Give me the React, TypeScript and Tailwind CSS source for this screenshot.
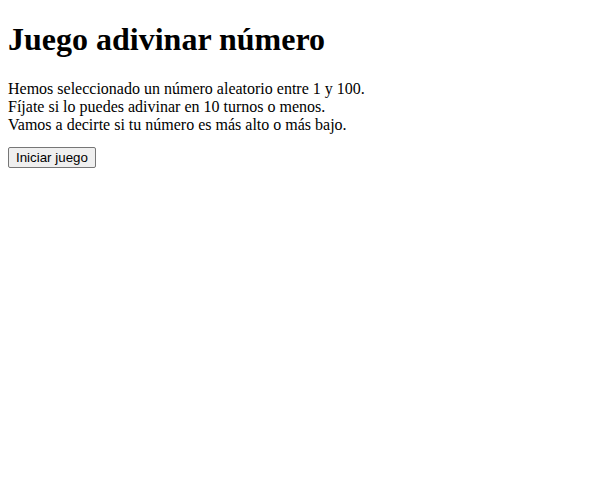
export default function App() {
  return (
    <div className="px-2 bg-white text-black" style={{ fontFamily: '"Liberation Serif", "Times New Roman", serif' }}>
      <div className="pt-[21.44px]">
        <h1 className="text-[32px] font-bold leading-[normal] mb-[21.44px]">Juego adivinar número</h1>
        <p className="text-[16px] leading-[normal] mb-[11px]">
          Hemos seleccionado un número aleatorio entre 1 y 100.
          <br />
          Fíjate si lo puedes adivinar en 10 turnos o menos.
          <br />
          Vamos a decirte si tu número es más alto o más bajo.
        </p>
        <div>
          <button
            className="border border-[#767676] bg-[#efefef] rounded-[2px] px-[7px] py-[2px] text-[13.33px] leading-[normal] text-black"
            style={{ fontFamily: '"Liberation Sans", Arial, sans-serif' }}
          >
            Iniciar juego
          </button>
        </div>
      </div>
    </div>
  );
}
